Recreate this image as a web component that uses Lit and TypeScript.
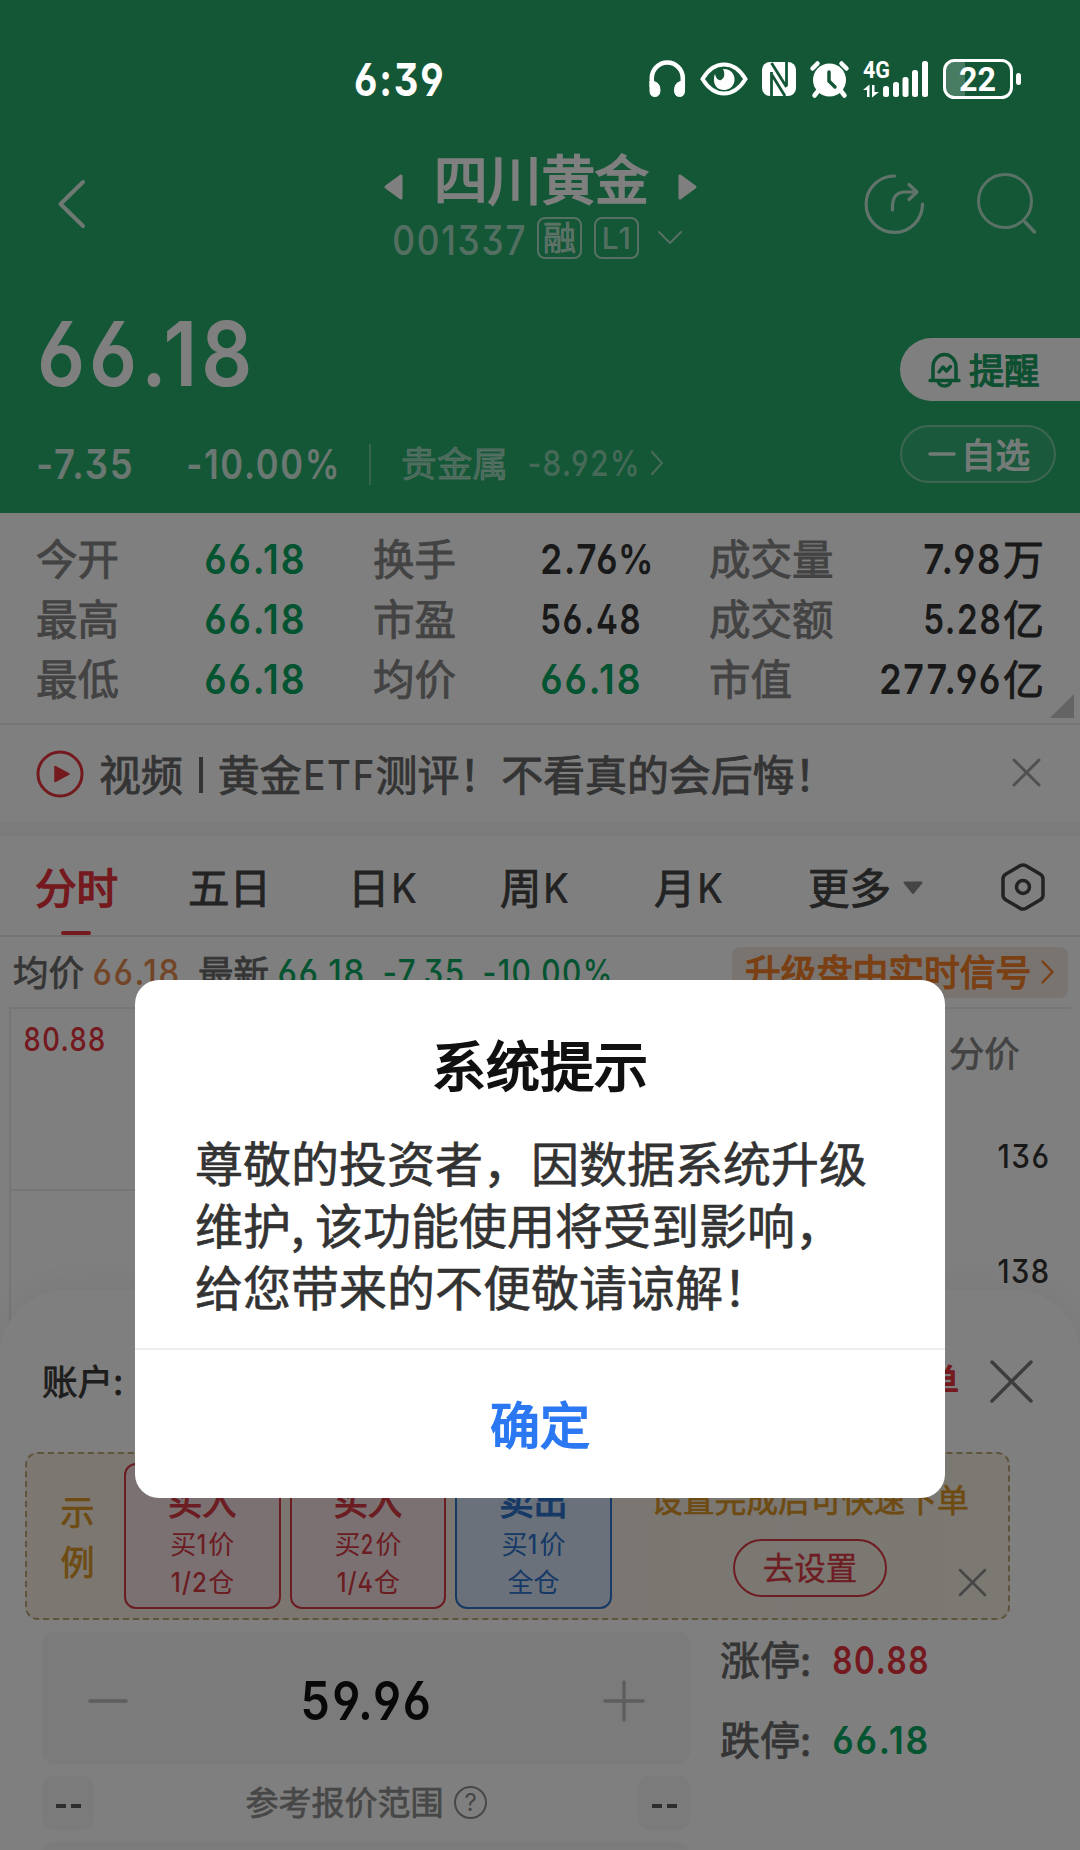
import { LitElement, html, svg, css, nothing } from "lit";
import { customElement, property } from "lit/decorators.js";

/** Condensed figures: the text is fitted to an exact ink width and cap height. */
@customElement("fit-num")
class FitNum extends LitElement {
  @property() text = "";
  @property({ type: Number }) w = 0;
  @property({ type: Number }) cap = 30;

  static styles = css`
    :host { display: block; flex: none; }
    svg { display: block; overflow: visible; }
    text { fill: currentColor; font-family: Inter, Roboto, "Liberation Sans", sans-serif; font-feature-settings: "ss01" 1; letter-spacing: .05em; }
  `;

  render() {
    const size = this.cap / 0.727;
    const pad = size * 0.045;
    const trail = this.text.length > 1 ? size * 0.035 : 0;
    return html`<svg width=${this.w} height=${this.cap}>
      <text x=${-pad} y=${this.cap} font-size=${size} textLength=${this.w + pad * 2 + trail} lengthAdjust="spacingAndGlyphs">${this.text}</text>
    </svg>`;
  }
}

const num = (text: string, w: number, cap: number, cls = "") =>
  html`<fit-num class=${cls} .text=${text} .w=${w} .cap=${cap}></fit-num>`;

const icon = (w: number, h: number, body: unknown, cls = "") =>
  html`<svg class="icon ${cls}" width=${w} height=${h} viewBox="0 0 ${w} ${h}" fill="none" stroke="currentColor" stroke-linecap="round" stroke-linejoin="round">${body}</svg>`;

const cross = (s: number, sw: number, cls: string) =>
  icon(s, s, svg`<path stroke-width=${sw} d="M2 2L${s - 2} ${s - 2}M${s - 2} 2L2 ${s - 2}"/>`, cls);

@customElement("status-bar")
class StatusBar extends LitElement {
  static styles = css`
    :host { display: flex; align-items: center; height: 140px; padding-top: 18px; box-sizing: border-box; color: #fff; position: relative; z-index: 3; }
    svg { display: block; flex: none; overflow: visible; }
    .time { margin-left: 356px; margin-right: 207px; font-weight: 700; }
    .gap { margin-right: 14px; }
    .net { font: 700 23px Roboto, sans-serif; }
    .pct { font: 700 34px Roboto, sans-serif; }
  `;

  render() {
    const bars = [[20, 25], [30, 21], [39.5, 16], [49, 9], [59, 0]];
    return html`
      ${num("6:39", 86, 33, "time")}
      <svg class="gap" width="37" height="36" fill="none" stroke="#fff"><path stroke-width="4.500" d="M2.800 26V17a15.500 15.500 0 0 1 31 0v9"/><path fill="#fff" stroke-width="1" d="M1 20Q11 20 11 29Q11 35.500 6 35.500T1 30ZM35.500 20Q25.500 20 25.500 29Q25.500 35.500 30.500 35.500T35.500 30Z"/></svg>
      <svg class="gap" width="48" height="34" fill="none"><path d="M2.500 17C8 8 15 2.500 24 2.500S40 8 45.500 17C40 26 33 31.500 24 31.500S8 26 2.500 17Z" stroke="#fff" stroke-width="4"/><path d="M23 7c10 0 13 8 11 14-2 5-6 7-10 7-6 0-10-4-10-10 0-2 0-4 1-6 1 5 4 7 6 6 4-2 4-7 2-11Z" fill="#fff"/></svg>
      <svg class="gap" width="34" height="34" fill="none"><rect width="34" height="34" rx="8" fill="#fff"/><path stroke="#145737" stroke-width="2.800" d="M9.500 34V10M24.500 0v24M9.500 1L24.500 25M10 13L23 34"/></svg>
      <svg class="gap" width="39" height="36" fill="none" stroke="#fff" stroke-linecap="round"><circle cx="19.500" cy="19" r="16.500" fill="#fff" stroke="none"/><path stroke-width="4.500" d="M2.500 7.500l5-5M36.500 7.500l-5-5M8 30l-3.500 4.500M31 30l3.500 4.500"/><path stroke="#145737" stroke-width="3.500" d="M19 11v9l6 6"/></svg>
      <svg class="gap" width="66" height="36" fill="#fff">
        <text class="net" x="0" y="17" textLength="27" lengthAdjust="spacingAndGlyphs">4G</text>
        <path d="M4 36V29H0L6.500 23.500V36ZM9 24h2.500v7H16L9 36.500Z"/>
        ${bars.map(([x, y]) => svg`<rect x=${x} y=${y} width="6" height=${36 - y} rx="2.500"/>`)}
      </svg>
      <svg width="78" height="40" fill="none"><rect x="3" y="3" width="19" height="34" fill="#fff" fill-opacity=".22"/><rect x="1.500" y="1.500" width="67" height="37" rx="10" stroke="#fff" stroke-width="3"/><rect x="73" y="14" width="5" height="12" rx="2.500" fill="#fff"/><text class="pct" x="16" y="32" fill="#fff" textLength="37" lengthAdjust="spacingAndGlyphs">22</text></svg>
    `;
  }
}

type Cell = [string, string, number, string?, string?];
const STATS: Cell[] = [
  ["今开", "66.18", 97, "green"], ["换手", "2.76%", 110], ["成交量", "7.98", 74, "", "万"],
  ["最高", "66.18", 97, "green"], ["市盈", "56.48", 97], ["成交额", "5.28", 74, "", "亿"],
  ["最低", "66.18", 97, "green"], ["均价", "66.18", 97, "green"], ["市值", "277.96", 118, "", "亿"],
];

const CARDS = [
  { title: "买入", a: ["买", "1", "价"], b: ["1/2", "仓"], cls: "buy" },
  { title: "买入", a: ["买", "2", "价"], b: ["1/4", "仓"], cls: "buy" },
  { title: "卖出", a: ["买", "1", "价"], b: ["", "全仓"], cls: "sell" },
];

@customElement("app-root")
class AppRoot extends LitElement {
  static styles = css`
    :host { display: block; position: relative; width: 1080px; height: 1850px; overflow: hidden; background: #fff; color: #333;
      font-family: "Noto Sans CJK SC", sans-serif; font-weight: 400; line-height: 1; white-space: nowrap; }
    * { box-sizing: border-box; }
    .icon { display: block; flex: none; overflow: visible; }
    .row { display: flex; align-items: center; }
    .t { flex: none; margin-bottom: .07em; -webkit-text-stroke: .022em currentColor; }
    .thin .t, .t.thin { -webkit-text-stroke-width: 0; }
    .strong, .strong .t { -webkit-text-stroke: .036em currentColor; }
    fit-num { font-weight: 600; }
    .green { color: #09a862; }
    .red { color: #e8343e; }

    .hero { height: 513px; background: #28ae6e; color: #fff; }
    .nav { display: flex; align-items: center; height: 128px; }
    .back { margin-left: 56px; opacity: .85; }
    .heading { width: 313px; height: 128px; margin-left: 296px; padding-top: 12px; }
    .name { height: 54px; }
    .name .t { font-size: 53.7px; margin-left: 31px; margin-right: 29px; }
    .tri { margin-top: 16px; }
    .code { height: 42px; margin: 11px 0 0 10px; color: rgba(255,255,255,.62); }
    .code fit-num { margin-top: 3px; font-weight: 500; }
    .badge { display: flex; align-items: center; justify-content: center; width: 45px; height: 42px; margin-left: 13px; border: 2px solid; border-radius: 8px; font-size: 33px; }
    .badge + .badge { margin-left: 12px; }
    .code .badge fit-num { margin: 0; }
    .drop { margin-left: 19px; }
    .share { margin-left: 166px; opacity: .72; }
    .search { margin-left: 51px; opacity: .65; }
    .quote { display: flex; justify-content: space-between; }
    .price { margin: 53px 0 0 41px; }
    .change { height: 42px; margin: 57px 0 0 38px; }
    .change .chg { color: rgba(255,255,255,.82); }
    .change .pc { margin-left: 57px; }
    .vline { width: 2px; height: 41px; margin: 0 30px 0 31px; background: rgba(255,255,255,.32); }
    .sector { font-size: 35.7px; color: rgba(255,255,255,.48); margin-top: -2px; }
    .sector .t { margin-right: 21px; }
    .sector .icon { margin-left: 13px; }
    .sector fit-num { font-weight: 500; }
    .side { width: 180px; padding-top: 70px; }
    .remind { height: 63px; padding-left: 28px; background: #fff; border-radius: 32px 0 0 32px; color: #1ba063; font-size: 35.3px; }
    .remind .t { margin-left: 8px; }
    .fav { width: 156px; height: 58px; margin-top: 24px; padding-left: 26px; border: 2px solid rgba(255,255,255,.35); border-radius: 30px; background: rgba(255,255,255,.06); font-size: 34.5px; color: rgba(255,255,255,.86); }
    .fav .t { margin-left: 5px; }

    .stats { position: relative; display: grid; grid-template-columns: 170px 167px 169px 167px 127px 208px; grid-auto-rows: 60px; align-items: center; height: 212px; padding: 16px 0 0 36px; border-bottom: 2px solid #ededed; font-size: 41.5px; color: #333; }
    .stats .t.label { color: #868686; }
    .val { display: flex; align-items: center; }
    .val.end { justify-content: flex-end; gap: 4px; font-size: 41px; }
    .corner { position: absolute; right: 6px; bottom: 5px; }

    .video { height: 97px; padding: 2px 39px 0 36px; font-size: 41.9px; color: #686868; }
    .video .red { margin-top: -2px; }
    .video .first { margin-left: 15px; }
    .bar { width: 4px; height: 36px; margin: 0 15px 0 16px; background: #686868; }
    .video fit-num { margin: 0 3px 0 3px; font-weight: 500; }
    .x { margin: -4px 0 0 auto; color: #a0a0a0; }
    .band { height: 14px; background: #f6f6f6; }

    .tabs { display: grid; grid-template-columns: 153px 160px 152px 154px 154px 193px 46px; align-items: center; height: 101px; padding: 5px 0 0 35px; border-bottom: 2px solid #e9e9e9; font-size: 41.5px; color: #464646; }
    .tabs > .icon { margin-top: -3px; }
    .tab { position: relative; display: flex; align-items: center; }
    .tab fit-num { margin-left: 3px; font-weight: 500; }
    .tab .icon { margin-left: 12px; }
    .tab.on { color: #e8343e; }
    .tab.on::after { content: ""; position: absolute; left: 26px; bottom: -25px; width: 30px; height: 4px; border-radius: 2px; background: #e8343e; }

    .info { height: 70px; padding-left: 13px; font-size: 35.5px; color: #6a6a6a; }
    .info fit-num { margin-left: 10px; font-weight: 500; }
    .info .avg { color: #e58a4e; margin-right: 20px; }
    .info .gap { margin-left: 21px; }
    .upgrade { width: 336px; height: 51px; margin-left: 121px; padding-left: 13px; border-radius: 8px; background: #f5e8e0; color: #f48028; font-size: 35.8px; }
    .upgrade .icon { margin-left: 10px; }

    .chart { display: grid; grid-template-columns: 922px 140px; height: 343px; width: 1062px; margin-left: 9px; border-top: 2px solid #ededed; border-left: 2px solid #ededed; }
    .plot { height: 182px; border-bottom: 2px solid #ededed; padding: 18px 0 0 14px; }
    .plot fit-num, .levels fit-num { font-weight: 500; }
    .levels { display: flex; flex-direction: column; padding-top: 25px; }
    .levels .t { font-size: 35.3px; margin: 0 0 0 16px; color: #868686; }
    .levels fit-num { margin: 75px 0 0 66px; }
    .levels fit-num + fit-num { margin-top: 91px; }

    .sheet { position: relative; margin-top: -60px; height: 600px; border-radius: 66px 66px 0 0; background: #fff; box-shadow: 0 -4px 40px rgba(0,0,0,.06); }
    .account { height: 162px; padding: 20px 47px 0 42px; font-size: 35.6px; color: #3a3a3a; }
    .account .order { margin-left: auto; font-size: 35px; }
    .account .icon { margin-left: 31px; color: #7a7a7a; }

    .sample { position: relative; display: flex; width: 985px; height: 168px; margin-left: 25px; padding-top: 9px; border: 2px dashed #c0a67c; border-radius: 13px; background: linear-gradient(90deg, #f8efe0, #f6ece2 55%, #f8f2e6); color: #db9626; }
    .tag { display: flex; flex-direction: column; align-items: center; justify-content: center; gap: 13px; width: 97px; height: 146px; padding: 2px 0 0 4px; font-size: 34px; }
    .cards { display: flex; gap: 9px; }
    .card { display: flex; flex-direction: column; align-items: center; width: 156.6px; height: 146px; padding-top: 19px; border: 2px solid; border-radius: 12px; font-size: 26px; }
    .card .title { font-size: 34px; margin-bottom: 7px; -webkit-text-stroke: .036em currentColor; }
    .card .line { height: 38px; }
    .card .line fit-num { margin: 0 2px; font-weight: 500; }
    .buy { color: #d63a44; background: #f6e2e4; }
    .sell { color: #2c72cc; background: #d5e3f4; }
    .setup { flex: 1; display: flex; flex-direction: column; align-items: center; padding-top: 20px; font-size: 31.800px; }
    .setup > .t { margin-bottom: 24px; }
    .go { display: flex; align-items: center; justify-content: center; width: 154px; height: 58px; border: 2px solid; border-radius: 29px; color: #dc3c46; font-size: 31.500px; }
    .go .t { -webkit-text-stroke-width: .01em; }
    .dismiss { position: absolute; right: 21px; bottom: 21px; color: #8d8d8d; }

    .form { display: flex; padding: 12px 0 0 42px; }
    .left { display: flex; flex-direction: column; gap: 12px; width: 648px; }
    .box { background: #f6f6f6; border-radius: 12px; }
    .stepper { display: grid; grid-template-columns: 215px 301px 40px; align-items: center; height: 132px; padding: 5px 0 0 46px; color: #bdbdbd; }
    .stepper fit-num { color: #101010; }
    .range { justify-content: space-between; height: 54px; font-size: 33px; color: #8f8f8f; }
    .chip { display: flex; align-items: center; justify-content: center; gap: 5px; width: 52px; height: 54px; padding-top: 6px; }
    .dash { width: 10px; height: 4px; background: #5a5a5a; }
    .hint { gap: 10px; }
    .q { font: 400 24px Inter, sans-serif; fill: currentColor; stroke: none; }
    .more { height: 132px; border-radius: 14px; }
    .limits { display: flex; flex-direction: column; gap: 26px; margin-left: 30px; font-size: 40px; color: #6a6a6a; }
    .limit { height: 54px; }
    .limit .t { width: 114px; }
    .limit fit-num { margin-top: 2px; }

    .scrim { position: absolute; inset: 0; z-index: 2; background: rgba(0,0,0,.5); }
    .modal { position: absolute; z-index: 4; left: 135px; top: 980px; width: 810px; height: 518px; border-radius: 24px; background: #fff; }
    .mtitle { padding-top: 57px; text-align: center; font-size: 54px; color: #111; }
    .mtext { margin: 39px 0 0 60px; font-size: 48px; line-height: 62px; color: #333; -webkit-text-stroke: .6px #333; white-space: pre; }
    .ok { display: flex; justify-content: center; align-items: center; position: absolute; left: 0; right: 0; bottom: 0; height: 150px; border-top: 2px solid #eee; color: #2b78f2; font-size: 50px; }
    .ok .t { margin-bottom: .1em; }
  `;

  private stat([label, value, w, cls = "", unit]: Cell) {
    return html`<span class="t label">${label}</span>
      <span class="val ${cls} ${unit ? "end" : ""}">${num(value, w, 30)}${unit ? html`<span class="t">${unit}</span>` : nothing}</span>`;
  }

  private ktab(ch: string) {
    return html`<span class="tab"><span class="t">${ch}</span>${num("K", 24, 30)}</span>`;
  }

  render() {
    return html`
      <section class="hero">
        <status-bar></status-bar>
        <div class="nav">
          ${icon(32, 50, svg`<path stroke-width="4" d="M27 3L4.500 25L27 47"/>`, "back")}
          <div class="heading">
            <div class="row name strong">
              ${icon(19, 26, svg`<path fill="#fff" stroke-width="3" d="M17 2V24L2 13Z"/>`, "tri")}
              <span class="t">四川黄金</span>
              ${icon(19, 26, svg`<path fill="#fff" stroke-width="3" d="M2 2V24L17 13Z"/>`, "tri")}
            </div>
            <div class="row code">
              ${num("001337", 130, 30)}
              <span class="badge"><span class="t">融</span></span>
              <span class="badge">${num("L1", 27, 22)}</span>
              ${icon(24, 14, svg`<path stroke-width="2" d="M1 1L12 12L23 1"/>`, "drop")}
            </div>
          </div>
          ${icon(62, 62, svg`<path stroke-width="3.200" d="M31.500 3A28.200 28.200 0 1 0 59.500 31M29.500 37V33Q30 19 42 19H53M46 11.500L54 19L46 26.500"/>`, "share")}
          ${icon(62, 62, svg`<circle cx="29" cy="28" r="26.500" stroke-width="3"/><path stroke-width="3.500" d="M49 49L58.500 59"/>`, "search")}
        </div>
        <div class="quote">
          <div>
            ${num("66.18", 208, 65, "price")}
            <div class="row change">
              ${num("-7.35", 93, 30, "chg")}
              ${num("-10.00%", 150, 30, "chg pc")}
              <i class="vline"></i>
              <div class="row sector">
                <span class="t">贵金属</span>${num("-8.92%", 109, 26)}
                ${icon(12, 24, svg`<path stroke-width="2.200" d="M1 1L11 12L1 23"/>`)}
              </div>
            </div>
          </div>
          <div class="side">
            <div class="row remind strong">
              ${icon(33, 35, svg`<path stroke-width="3.500" d="M5 27V15a11.500 12.500 0 0 1 23 0v12M2 28.500H31M10.500 30a6 4 0 0 0 12 0M11 20l4-5 3.500 4 4-4.500"/>`)}
              <span class="t">提醒</span>
            </div>
            <div class="row fav strong">
              ${icon(28, 4, svg`<path stroke-width="3.500" d="M2 2H26"/>`)}<span class="t">自选</span>
            </div>
          </div>
        </div>
      </section>

      <section class="stats">
        ${STATS.map((s) => this.stat(s))}
        ${icon(24, 24, svg`<path d="M24 0V24H0Z" fill="#c9c9c9" stroke="none"/>`, "corner")}
      </section>

      <section class="row video">
        ${icon(48, 48, svg`<circle cx="24" cy="24" r="22" stroke-width="3"/><path d="M19 16.500V31.500L33 24Z" fill="currentColor" stroke-width="1.500"/>`, "red")}
        <span class="t first">视频</span><i class="bar"></i><span class="t">黄金</span>${num("ETF", 68, 30)}<span class="t">测评！不看真的会后悔！</span>
        ${cross(29, 3, "x")}
      </section>
      <div class="band"></div>

      <nav class="tabs">
        <span class="tab on strong"><span class="t">分时</span></span>
        <span class="tab"><span class="t">五日</span></span>
        ${this.ktab("日")}${this.ktab("周")}${this.ktab("月")}
        <span class="tab"><span class="t">更多</span>${icon(20, 13, svg`<path fill="#8a8a8a" stroke="#8a8a8a" stroke-width="2" d="M1.500 1.500H18.500L10 12Z"/>`)}</span>
        ${icon(44, 48, svg`<path stroke-width="3.500" d="M19 2.800Q22 1 25 2.800L39 11Q42 12.800 42 16V32Q42 35.200 39 37L25 45.200Q22 47 19 45.200L5 37Q2 35.200 2 32V16Q2 12.800 5 11Z"/><circle cx="22" cy="24" r="6.500" stroke-width="3.500"/>`)}
      </nav>

      <section class="row info">
        <span class="t">均价</span>${num("66.18", 84, 25.5, "avg")}
        <span class="t">最新</span>${num("66.18", 84, 25.5, "green")}${num("-7.35", 79, 25.5, "green gap")}${num("-10.00%", 127, 25.5, "green gap")}
        <div class="row upgrade strong"><span class="t">升级盘中实时信号</span>${icon(13, 24, svg`<path stroke-width="2.500" d="M1.500 1.500L11.500 12L1.500 22.500"/>`)}</div>
      </section>

      <section class="chart">
        <div class="plot">${num("80.88", 79, 23.5, "red")}</div>
        <div class="levels"><span class="t">分价</span>${num("136", 49, 23.5)}${num("138", 49, 23.5)}</div>
      </section>

      <section class="sheet">
        <div class="row account"><span class="t">账户:</span><span class="t order red strong">单</span>${cross(43, 3.5, "")}</div>
        <div class="sample">
          <div class="tag"><span class="t">示</span><span class="t">例</span></div>
          <div class="cards">
            ${CARDS.map((c) => html`<div class="card ${c.cls}">
              <span class="title">${c.title}</span>
              <div class="row line thin"><span class="t">${c.a[0]}</span>${num(c.a[1], c.a[1] === "1" ? 8 : 11, 20)}<span class="t">${c.a[2]}</span></div>
              <div class="row line thin">${c.b[0] ? num(c.b[0], 34, 20) : nothing}<span class="t">${c.b[1]}</span></div>
            </div>`)}
          </div>
          <div class="setup"><span class="t">设置完成后可快速下单</span><div class="go"><span class="t">去设置</span></div></div>
          ${cross(29, 2.5, "dismiss")}
        </div>
        <div class="form">
          <div class="left">
            <div class="box stepper">
              ${icon(40, 40, svg`<path stroke-width="3.500" d="M2 20H38"/>`)}
              ${num("59.96", 126, 38.5)}
              ${icon(40, 40, svg`<path stroke-width="3.500" d="M1 20H39M20 1V39"/>`)}
            </div>
            <div class="row range">
              <span class="box chip"><i class="dash"></i><i class="dash"></i></span>
              <span class="row hint"><span class="t">参考报价范围</span>${icon(33, 33, svg`<circle cx="16.500" cy="16.500" r="15.500" stroke-width="2"/><text class="q" x="10.500" y="25">?</text>`)}</span>
              <span class="box chip"><i class="dash"></i><i class="dash"></i></span>
            </div>
            <div class="box more"></div>
          </div>
          <div class="limits">
            <div class="row limit"><span class="t">涨停:</span>${num("80.88", 93, 28, "red")}</div>
            <div class="row limit"><span class="t">跌停:</span>${num("66.18", 93, 28, "green")}</div>
          </div>
        </div>
      </section>

      <div class="scrim"></div>
      <div class="modal">
        <div class="mtitle strong">系统提示</div>
        <div class="mtext">尊敬的投资者，因数据系统升级
维护, 该功能使用将受到影响，
给您带来的不便敬请谅解！</div>
        <div class="ok strong"><span class="t">确定</span></div>
      </div>
    `;
  }
}
